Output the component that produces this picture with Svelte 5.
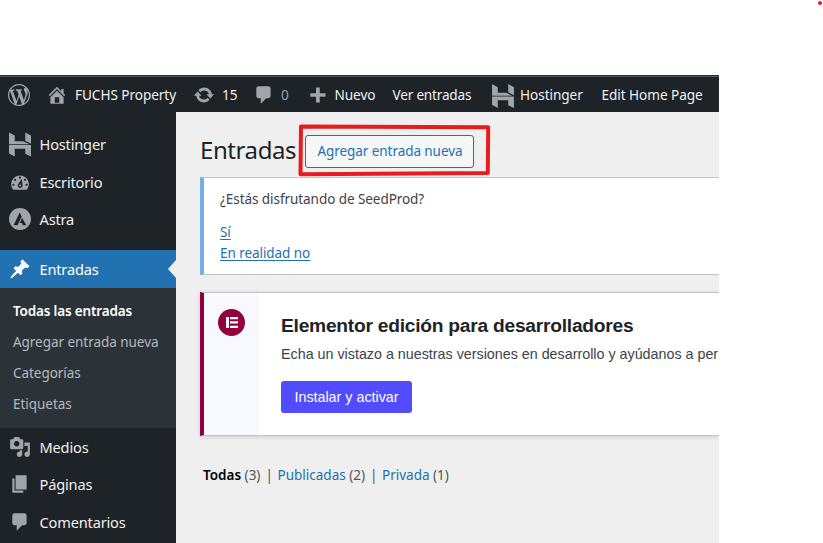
<script>
  const icons = {
    wordpress: 'M20 10c0-5.51-4.49-10-10-10C4.48 0 0 4.49 0 10c0 5.52 4.48 10 10 10 5.51 0 10-4.48 10-10zM7.78 15.37L4.37 6.22c.55-.02 1.17-.08 1.17-.08.5-.06.44-1.13-.06-1.11 0 0-1.45.11-2.37.11-.18 0-.37 0-.58-.01C4.12 2.69 6.87 1.11 10 1.11c2.33 0 4.45.87 6.05 2.34-.68-.11-1.65.39-1.65 1.58 0 .74.45 1.36.9 2.1.35.61.55 1.36.55 2.46 0 1.49-1.4 5-1.4 5l-3.03-8.37c.54-.02.82-.17.82-.17.5-.05.44-1.25-.06-1.22 0 0-1.44.12-2.38.12-.87 0-2.33-.12-2.33-.12-.5-.03-.56 1.2-.06 1.22l.92.08 1.26 3.41zM17.41 10c.24-.64.74-1.87.43-4.25.7 1.29 1.05 2.71 1.05 4.25 0 3.29-1.73 6.24-4.4 7.78.97-2.59 1.94-5.2 2.92-7.78zM6.1 18.09C3.12 16.65 1.11 13.53 1.11 10c0-1.3.23-2.48.72-3.59C3.25 10.3 4.67 14.2 6.1 18.09zm4.03-6.63l2.58 6.98c-.86.29-1.76.45-2.71.45-.79 0-1.57-.11-2.29-.33.81-2.38 1.62-4.74 2.42-7.1z',
    home: 'M16 8.5l1.53 1.53-1.06 1.06L10 4.6l-6.47 6.49-1.06-1.06L10 2.5l4 4v-2h2v4zm-6-2.46l6 5.99V18H4v-5.97zM12 17v-5H8v5h4z',
    update: 'M10.2 3.28c3.53 0 6.43 2.61 6.92 6h2.08l-3.5 4-3.5-4h2.32c-.45-1.97-2.21-3.45-4.32-3.45-1.45 0-2.73.71-3.54 1.78L4.95 5.66C6.23 4.2 8.11 3.28 10.2 3.28zm-.4 13.44c-3.52 0-6.43-2.61-6.92-6H.8l3.5-4c1.17 1.33 2.33 2.67 3.5 4H5.48c.45 1.97 2.21 3.45 4.32 3.45 1.45 0 2.73-.71 3.54-1.78l1.71 1.95c-1.28 1.46-3.15 2.38-5.25 2.38z',
    comment: 'M5 2h9c1.1 0 2 .9 2 2v7c0 1.1-.9 2-2 2h-2l-5 5v-5H5c-1.1 0-2-.9-2-2V4c0-1.1.9-2 2-2z',
    plus: 'M16.800 8.300v3.400h-5.200v5.200H8.200v-5.200H3V8.300h5.200V3.100h3.400v5.200z',
    hostinger: 'M0 0l5.500 3v5.500h8L19.500 11.200H0zM15.500 0l5.500 3v7.800l-5.500-2.800zM0 20V12h15.500l5.500 0V23l-5.500-2.600V15.500h-8l-2 0V23z',
    dashboard: 'M3.760 17h12.480c1.100-1.370 1.760-3.110 1.760-5 0-4.420-3.580-8-8-8s-8 3.580-8 8c0 1.890.660 3.630 1.760 5zM9 6a1 1 0 1 1 2 0 1 1 0 0 1-2 0zM4.500 8a1 1 0 1 1 2 0 1 1 0 0 1-2 0zM13.500 8a1 1 0 1 1 2 0 1 1 0 0 1-2 0zM3 12.500a1 1 0 1 1 2 0 1 1 0 0 1-2 0zM15 12.500a1 1 0 1 1 2 0 1 1 0 0 1-2 0zM11.700 7.200l.6 5.900c0 1.300-1 2.300-2.200 2.300s-2.200-1-2.200-2.200c0-1.300 3.800-6 3.800-6zM10 12.300a.9.9 0 1 0 .01 1.800.9.9 0 0 0 0-1.800z',
    astra: 'M10 0a10 10 0 1 0 0 20 10 10 0 0 0 0-20zM9.700 4l1.900 3.800-3.900 7.800H4.200zM12 9l3.700 6.600h-3.100l-.9-2H9.600z',
    pin: 'M10.440 3.020l1.820-1.820 6.360 6.350-1.830 1.820c-1.050-.68-2.480-.57-3.410.36l-.75.75c-.92.93-1.040 2.350-.35 3.410l-1.830 1.820-2.410-2.410-2.800 2.790c-.42.42-3.380 2.710-3.800 2.290s1.860-3.390 2.280-3.810l2.790-2.790L4.100 9.360l1.830-1.820c1.050.69 2.480.57 3.400-.36l.75-.75c.93-.92 1.050-2.350.36-3.410z',
    media: 'M13 11V4c0-.55-.45-1-1-1h-1.670L9 1H5L3.670 3H2c-.55 0-1 .45-1 1v7c0 .55.45 1 1 1h10c.55 0 1-.45 1-1zM7 4.500c1.380 0 2.500 1.120 2.500 2.500S8.380 9.500 7 9.500 4.500 8.380 4.500 7 5.620 4.500 7 4.500zM14 6h5v10.500c0 1.380-1.120 2.500-2.500 2.500S14 17.880 14 16.500s1.120-2.500 2.500-2.500c.17 0 .34.02.5.05V9h-3V6zm-4 8.050V13h2v3.500c0 1.380-1.120 2.500-2.500 2.500S7 17.880 7 16.500 8.120 14 9.500 14c.17 0 .34.02.5.05z',
    page: 'M6 15V2h10v13H6zm-1 1h8v2H3V5h2v11z',
  };

  const top = [
    { label: 'Hostinger', icon: 'hostinger' },
    { label: 'Escritorio', icon: 'dashboard' },
    { label: 'Astra', icon: 'astra' },
  ];
  const submenu = ['Todas las entradas', 'Agregar entrada nueva', 'Categorías', 'Etiquetas'];
  const bottom = [
    { label: 'Medios', icon: 'media' },
    { label: 'Páginas', icon: 'page' },
    { label: 'Comentarios', icon: 'comment' },
  ];
</script>

{#snippet icon(name)}
  <svg class="icon {name}" viewBox={name === 'hostinger' ? '0 0 21 23' : '0 0 20 20'}>
    <path fill-rule="evenodd" d={icons[name]} />
  </svg>
{/snippet}

{#snippet row(item)}
  <a class="row">{@render icon(item.icon)}<span>{item.label}</span></a>
{/snippet}

<div class="canvas">
  <div class="admin">
    <header>
      <a class="logo">{@render icon('wordpress')}</a>
      <a class="site">{@render icon('home')}<span>FUCHS Property</span></a>
      <a class="updates">{@render icon('update')}<span>15</span></a>
      <a class="comments">{@render icon('comment')}<span>0</span></a>
      <a class="new">{@render icon('plus')}<span>Nuevo</span></a>
      <a class="view"><span>Ver entradas</span></a>
      <a class="host">{@render icon('hostinger')}<span>Hostinger</span></a>
      <a class="edit"><span>Edit Home Page</span></a>
    </header>
    <div class="body">
      <nav>
        {#each top as item}{@render row(item)}{/each}
        <a class="row current">{@render icon('pin')}<span>Entradas</span></a>
        <div class="submenu">
          {#each submenu as label, i}<a class:active={i === 0}>{label}</a>{/each}
        </div>
        {#each bottom as item}{@render row(item)}{/each}
      </nav>
      <main>
        <div class="title">
          <h1>Entradas</h1>
          <button class="add">Agregar entrada nueva</button>
          <svg class="mark" width="194" height="54" viewBox="0 0 194 54">
            <path d="M4 3.500L191.200 4.200 190.800 50 3.500 51.200z" />
          </svg>
        </div>
        <section class="seed">
          <p>¿Estás disfrutando de SeedProd?</p>
          <a class="yes">Sí</a>
          <a class="no">En realidad no</a>
        </section>
        <section class="elementor">
          <div class="aside">
            <svg width="27" height="27" viewBox="0 0 27 27">
              <circle cx="13.500" cy="13.500" r="13.500" fill="#93003f" />
              <path d="M8 8h3v11H8zM12 8h8v2.300h-8zM12 12.300h8v2.300h-8zM12 16.700h8V19h-8z" fill="#fff" />
            </svg>
          </div>
          <div class="content">
            <h2>Elementor edición para desarrolladores</h2>
            <p>Echa un vistazo a nuestras versiones en desarrollo y ayúdanos a per</p>
            <button>Instalar y activar</button>
          </div>
        </section>
        <div class="filters">
          <span class="f1"><b>Todas</b> <i>(3)</i></span>
          <span class="bar">|</span>
          <span class="f2"><a>Publicadas</a> <i>(2)</i></span>
          <span class="bar">|</span>
          <span class="f3"><a>Privada</a> <i>(1)</i></span>
        </div>
      </main>
    </div>
  </div>
  <span class="dot"></span>
</div>

<style>
  :global(body) { background: #fff; }
  .canvas {
    position: relative;
    box-sizing: border-box;
    width: 823px;
    height: 543px;
    padding-top: 75px;
    overflow: hidden;
    background: #fff;
    font-family: 'Noto Sans', 'Open Sans', sans-serif;
  }
  .canvas * { box-sizing: border-box; }
  h1, h2, p { margin: 0; }
  .admin { width: 719px; height: 468px; overflow: hidden; }
  .icon { flex: none; width: 22px; height: 22px; fill: #a0a5aa; }

  header {
    display: flex;
    height: 37px;
    padding-top: 2px;
    background: linear-gradient(#2b2f33 0 1px, #54585b 1px 2px, #1d2327 2px);
    color: #f0f0f1;
    font-size: 13.6px;
    letter-spacing: -0.06px;
    white-space: nowrap;
  }
  header a { display: flex; align-items: center; height: 34px; }
  header .icon { margin-top: 2px; }
  header .logo { width: 46px; padding-left: 8px; }
  header .site { width: 147px; }
  .site span { margin-left: 7px; }
  header .updates { width: 60px; }
  .updates span { margin-left: 7px; }
  header .comments { width: 54px; color: #9ca2a7; }
  .comments span { margin-left: 6px; }
  header .new { width: 85.500px; }
  .new span { margin-left: 5.500px; }
  header .view { width: 99px; letter-spacing: -0.2px; }
  header .host { width: 110px; }
  .host .icon { width: 22px; height: 24px; margin-top: 4px; }
  .host span { margin-left: 6.500px; }

  .body { display: flex; height: 431px; }
  nav { width: 176px; padding-top: 13.500px; background: #1d2327; flex: none; }
  .row {
    display: flex;
    align-items: center;
    gap: 8.500px;
    height: 37.500px;
    padding-left: 9px;
    color: #f0f0f1;
    font-size: 14.600px;
    letter-spacing: -0.18px;
  }
  nav .hostinger { width: 22px; height: 25px; }
  .current {
    position: relative;
    height: 38px;
    margin-top: 12px;
    background: #2271b1;
    color: #fff;
  }
  .current .icon { fill: #fff; }
  .current::after {
    content: '';
    position: absolute;
    right: 0;
    top: 10px;
    border: solid transparent;
    border-width: 9px 8px 9px 0;
    border-right-color: #efefef;
  }
  .submenu { height: 140px; padding: 8px 0 0 13px; background: #2c3338; }
  .submenu a {
    display: block;
    height: 31px;
    line-height: 31px;
    color: #b4b9be;
    font-size: 13.500px;
    letter-spacing: -0.04px;
    white-space: nowrap;
  }
  .submenu .active { color: #fff; font-weight: 600; letter-spacing: -0.17px; }

  main { width: 543px; padding-left: 24px; background: #efefef; }
  .title { position: relative; display: flex; height: 65px; padding-top: 23px; }
  h1 {
    width: 105px;
    margin-top: -1px;
    color: #1d2327;
    font-size: 24px;
    font-weight: 400;
    letter-spacing: -0.42px;
    line-height: 31px;
  }
  .add {
    width: 169px;
    height: 33px;
    padding: 0 0 1px 1px;
    border: 1px solid #2271b1;
    border-radius: 3px;
    background: #f6f7f7;
    color: #2271b1;
    font: 13.500px 'Noto Sans', sans-serif;
    letter-spacing: -0.07px;
    white-space: nowrap;
  }
  .mark { position: absolute; left: 97px; top: 11px; }
  .mark path { fill: none; stroke: #e81c1f; stroke-width: 4; stroke-linejoin: round; }

  section { background: #fff; border: solid #c3c4c7; border-width: 1px 0; }
  .seed {
    display: flex;
    flex-direction: column;
    align-items: flex-start;
    height: 98px;
    padding: 11px 0 0 16px;
    border-left: 4px solid #72aee6;
    color: #3c434a;
    font-size: 13.500px;
    letter-spacing: -0.06px;
    line-height: 21px;
  }
  .seed a { color: #2271b1; text-decoration: underline; text-underline-offset: 2px; }
  .seed .yes { margin-top: 12px; }

  .elementor {
    display: flex;
    height: 144px;
    margin-top: 17px;
    border-left: 4px solid #93003f;
    box-shadow: 0 1px 4px rgba(0, 0, 0, 0.15);
    font-family: 'Liberation Sans', Arial, sans-serif;
  }
  .aside { width: 55px; padding: 16px 0 0 14px; background: #f8f8ff; }
  .content { padding: 20px 0 0 22px; white-space: nowrap; }
  h2 { color: #1d2327; font-size: 19.200px; letter-spacing: -0.24px; line-height: 25px; }
  .content p { color: #3c434a; font-size: 14.300px; line-height: 20px; margin-top: 6px; }
  .content button {
    display: block;
    width: 131px;
    height: 32px;
    margin-top: 17px;
    padding: 0 0 1px;
    border: 0;
    border-radius: 3px;
    background: #524cff;
    color: #fff;
    font: 14.300px 'Liberation Sans', sans-serif;
  }

  .filters { display: flex; margin: 28px 0 0 3px; font-size: 13.500px; line-height: 22px; white-space: nowrap; }
  .filters i { color: #50575e; font-style: normal; }
  .filters b { color: #000; font-weight: 600; }
  .filters a { color: #2271b1; }
  .f1 { width: 62.500px; }
  .f2 { width: 92.500px; }
  .bar { width: 12px; color: #50575e; }

  .dot {
    position: absolute;
    left: 818px;
    top: 1px;
    width: 4px;
    height: 4px;
    border-radius: 50%;
    background: #e81c1f;
  }
</style>
